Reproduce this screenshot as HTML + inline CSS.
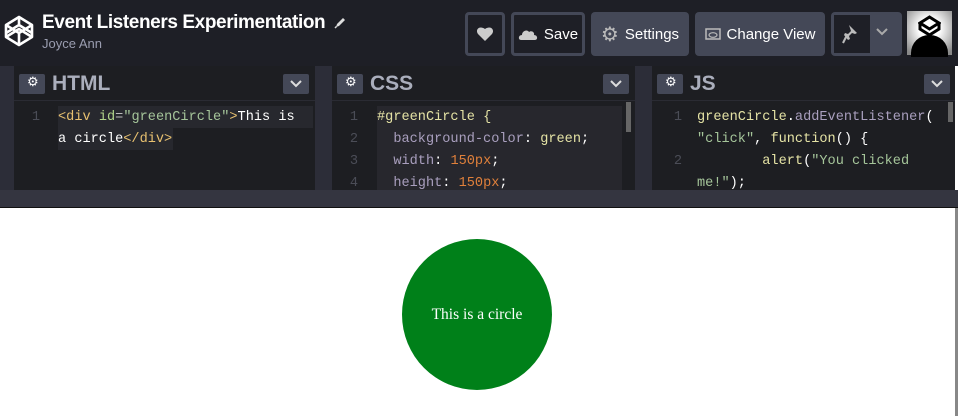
<!DOCTYPE html>
<html><head><style>
*{margin:0;padding:0;box-sizing:border-box}
body{width:958px;height:416px;overflow:hidden;background:#fff;font-family:"Liberation Sans",sans-serif;position:relative}
.hdr{position:absolute;left:0;top:0;width:958px;height:66px;background:#1e1f26}
.abs{position:absolute}
.btn{position:absolute;top:12px;height:44px;border-radius:4px;background:#444857;color:#fff;font-size:15px;display:flex;align-items:center;justify-content:center;gap:6px}
.btn.o{background:#1e1f26;border:3px solid #444857}
.ed{position:absolute;top:66px;height:124px;background:#1d1e22}
.ph{position:absolute;left:0;top:0;right:0;height:35px;border-bottom:1px solid #2a2b33}
.gear{position:absolute;left:5px;top:8px;width:26px;height:20px;background:#444857;border-radius:2px}
.chev{position:absolute;top:8px;width:26px;height:20px;background:#444857;border-radius:2px}
.ptitle{position:absolute;left:38px;top:6px;color:#aaaebc;font-size:21px;font-weight:bold}
.code{position:absolute;font-family:"Liberation Mono",monospace;font-size:13.6px;line-height:22px;white-space:pre;color:#fff}
.ln{position:absolute;font-family:"Liberation Mono",monospace;font-size:13.6px;line-height:22px;color:#4b4d57;text-align:right;width:20px}
.t{color:#e8c170}.a{color:#b0d58a}.s{color:#a5c59a}.k{color:#a99fbe}.n{color:#e0803b}.p{color:#bbb}.v{color:#e5e3a5}
</style></head><body>
<div class="hdr"></div>
<svg class="abs" style="left:3px;top:14px" width="32" height="34" viewBox="0 0 32 34"><g fill="none" stroke="#fff" stroke-width="2.6" stroke-linejoin="round"><path d="M16 3 L29 11 L29 23 L16 31 L3 23 L3 11 Z"/><path d="M3 11 L16 19 L29 11 M16 3 L16 11 L3 19 M16 11 L29 19 M16 19 L16 31 M3 23 L16 15 L29 23"/></g></svg>
<div class="abs" style="left:42px;top:12px;color:#fff;font-size:19px;font-weight:bold;letter-spacing:-0.4px">Event Listeners Experimentation</div>
<svg class="abs" style="left:334px;top:16px" width="13" height="13" viewBox="0 0 13 13"><path d="M2 11 L3 8 L9 2 L11 4 L5 10 Z" fill="#ddd"/><path d="M1 12 L2.5 10.5" stroke="#ddd" stroke-width="1.5"/></svg>
<div class="abs" style="left:42px;top:36px;color:#9a9db0;font-size:13px">Joyce Ann</div>
<div class="btn o" style="left:465px;width:40px"><svg width="18" height="16" viewBox="0 0 18 16"><path d="M9 15 L2 8 C-1 4 3 -1 9 3 C15 -1 19 4 16 8 Z" fill="#ccc"/></svg></div>
<div class="btn o" style="left:511px;width:74px"><svg width="20" height="12" viewBox="0 0 20 12"><path d="M3 12 C0 12 0 7 4 7 C4 3 9 1 11 4 C13 2 17 4 16 7 C20 7 20 12 17 12 Z" fill="#ccc"/></svg>Save</div>
<div class="btn" style="left:591px;width:98px"><span style="color:#bbb;font-size:20px">⚙</span>Settings</div>
<div class="btn" style="left:695px;width:130px"><svg width="16" height="12" viewBox="0 0 16 12"><rect x="1" y="1" width="14" height="10" fill="none" stroke="#bbb" stroke-width="1.5"/><ellipse cx="8" cy="7" rx="4" ry="2.3" fill="none" stroke="#bbb" stroke-width="1.2"/></svg>Change View</div>
<div class="btn" style="left:831px;width:71px;background:#444857"></div>
<div class="abs" style="left:834px;top:15px;width:36px;height:38px;background:#1e1f26"></div>
<svg class="abs" style="left:842px;top:24px" width="18" height="20" viewBox="0 0 18 20"><path d="M7 1 L15 9 L13 10 L10 9 L7 12 L8 15 L6 16 L2 11 L3 9 L6 10 L9 7 L8 4 Z" fill="#bbb"/><path d="M4 13 L1 19" stroke="#bbb" stroke-width="2"/></svg>
<svg class="abs" style="left:876px;top:28px" width="12" height="8"><path d="M1 1 L6 6 L11 1" stroke="#aaa" stroke-width="2" fill="none"/></svg>
<div class="abs" style="left:907px;top:11px;width:45px;height:44px;background:radial-gradient(circle at 50% 40%,#fff 30%,#888 90%)"><div style="position:absolute;left:4px;top:24px;width:37px;height:22px;background:#000;border-radius:18px 18px 0 0"></div><svg style="position:absolute;left:11px;top:4px" width="23" height="22" viewBox="0 0 23 22"><path d="M11.5 2 L21 8 L11.5 14 L2 8 Z M2 8 L2 14 L11.5 20 L21 14 L21 8" fill="none" stroke="#000" stroke-width="3"/></svg></div>

<div class="abs" style="left:0;top:66px;width:14px;height:124px;background:#2c2d38"></div>
<div class="abs" style="left:315px;top:66px;width:17px;height:124px;background:#2c2d38"></div>
<div class="abs" style="left:635px;top:66px;width:17px;height:124px;background:#2c2d38"></div>
<div class="abs" style="left:0;top:190px;width:958px;height:17px;background:#343540"></div>
<div class="abs" style="left:0;top:207px;width:958px;height:1px;background:#111"></div>
<div class="abs" style="left:955px;top:208px;width:3px;height:208px;background:#888"></div>

<div class="ed" style="left:14px;width:301px">
<div class="ph"><div class="gear"></div><span class="abs" style="left:13px;top:8px;color:#fff;font-size:13px">⚙</span><div class="ptitle">HTML</div><div class="chev" style="left:269px"></div><svg class="abs" style="left:276px;top:14px" width="12" height="8"><path d="M1 1 L6 6 L11 1" stroke="#ddd" stroke-width="2" fill="none"/></svg></div>
<div class="abs" style="left:44px;top:40px;width:255px;height:22px;background:#27282e"></div>
<div class="abs" style="left:44px;top:62px;width:115px;height:22px;background:#27282e"></div>
<div class="ln" style="left:6px;top:41px">1</div>
<div class="code" style="left:44px;top:41px"><span class="t">&lt;div</span> <span class="a">id</span><span class="p">=</span><span class="s">"greenCircle"</span><span class="t">&gt;</span>This is
a circle<span class="t">&lt;/div&gt;</span></div>
</div>

<div class="ed" style="left:332px;width:303px">
<div class="ph"><div class="gear"></div><span class="abs" style="left:13px;top:8px;color:#fff;font-size:13px">⚙</span><div class="ptitle">CSS</div><div class="chev" style="left:271px"></div><svg class="abs" style="left:278px;top:14px" width="12" height="8"><path d="M1 1 L6 6 L11 1" stroke="#ddd" stroke-width="2" fill="none"/></svg></div>
<div class="abs" style="left:45px;top:40px;width:245px;height:84px;background:#27272d"></div>
<div class="abs" style="left:294px;top:36px;width:5px;height:30px;background:#666"></div>
<div class="ln" style="left:6px;top:41px">1<br>2<br>3<br>4</div>
<div class="code" style="left:45px;top:41px"><span class="v">#greenCircle</span> <span class="v">{</span>
  <span class="k">background-color</span>: <span class="v">green</span>;
  <span class="k">width</span>: <span class="n">150px</span>;
  <span class="k">height</span>: <span class="n">150px</span>;</div>
</div>

<div class="ed" style="left:652px;width:303px">
<div class="ph"><div class="gear"></div><span class="abs" style="left:13px;top:8px;color:#fff;font-size:13px">⚙</span><div class="ptitle">JS</div><div class="chev" style="left:272px"></div><svg class="abs" style="left:279px;top:14px" width="12" height="8"><path d="M1 1 L6 6 L11 1" stroke="#ddd" stroke-width="2" fill="none"/></svg></div>
<div class="abs" style="left:296px;top:36px;width:5px;height:20px;background:#666"></div>
<div class="ln" style="left:10px;top:41px">1<br><br>2</div>
<div class="code" style="left:45px;top:41px"><span class="v">greenCircle</span>.<span class="k">addEventListener</span>(
<span class="s">"click"</span>, <span class="v">function</span>() {
        <span class="v">alert</span>(<span class="s">"You clicked</span>
<span class="s">me!"</span>);</div>
</div>

<div class="abs" style="left:402px;top:239px;width:150px;height:151px;border-radius:50%;background:#008019;color:#fff;font-family:'Liberation Serif',serif;font-size:15.5px;display:flex;align-items:center;justify-content:center">This is a circle</div>
</body></html>
